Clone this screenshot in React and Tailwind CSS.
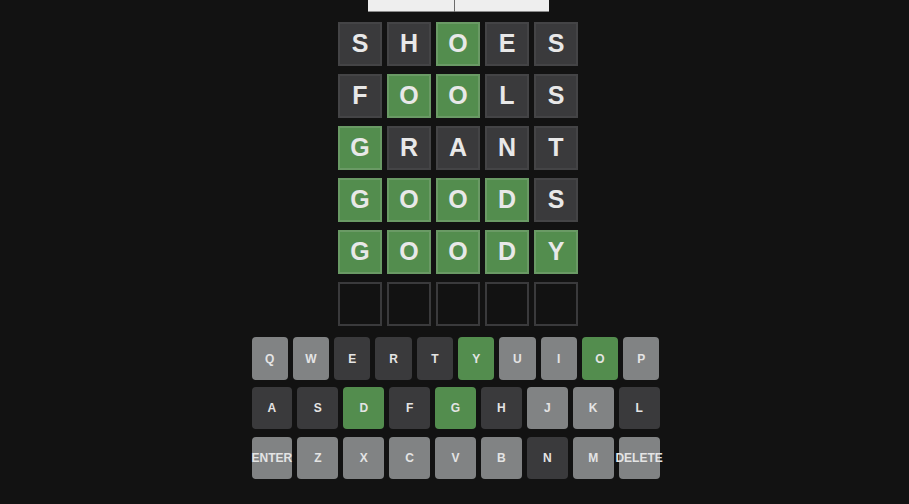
import React from "react";

const rows = [
  ["S", "H", "O", "E", "S"],
  ["F", "O", "O", "L", "S"],
  ["G", "R", "A", "N", "T"],
  ["G", "O", "O", "D", "S"],
  ["G", "O", "O", "D", "Y"],
  ["", "", "", "", ""],
];

// g = green, x = absent
const states = [
  ["x", "x", "g", "x", "x"],
  ["x", "g", "g", "x", "x"],
  ["g", "x", "x", "x", "x"],
  ["g", "g", "g", "g", "x"],
  ["g", "g", "g", "g", "g"],
  ["e", "e", "e", "e", "e"],
];

const tileStyles = {
  g: "bg-[#538d4e] border-[#6a9a65]",
  x: "bg-[#3a3a3c] border-[#444446]",
  e: "bg-[#121212] border-[#3a3a3c]",
};

const keyRows = [
  [["Q", "u"], ["W", "u"], ["E", "x"], ["R", "x"], ["T", "x"], ["Y", "g"], ["U", "u"], ["I", "u"], ["O", "g"], ["P", "u"]],
  [["A", "x"], ["S", "x"], ["D", "g"], ["F", "x"], ["G", "g"], ["H", "x"], ["J", "u"], ["K", "u"], ["L", "x"]],
  [["ENTER", "u"], ["Z", "u"], ["X", "u"], ["C", "u"], ["V", "u"], ["B", "u"], ["N", "x"], ["M", "u"], ["DELETE", "u"]],
];

const keyStyles = {
  u: "bg-[#818384] text-[#e4e4e4]",
  x: "bg-[#3a3a3c] text-[#e4e4e4]",
  g: "bg-[#538d4e] text-[#e4e4e4]",
};

export default function App() {
  return (
    <div
      className="w-full min-h-[504px] bg-[#121212] flex flex-col items-center"
      style={{ fontFamily: '"Liberation Sans", Arial, sans-serif' }}
    >
      {/* Top controls + board */}
      <div className="flex flex-col items-center pl-[7px]">
        <div className="flex h-[12px]">
          <div className="w-[86px] h-full bg-[#eeeeee] border-b border-[#8a8a8a]"></div>
          <div className="w-[1px] h-full bg-[#6b6b6b]"></div>
          <div className="w-[94px] h-full bg-[#eeeeee] border-b border-[#8a8a8a]"></div>
        </div>

        <div className="mt-[10px] flex flex-col gap-[8px]">
          {rows.map((row, r) => (
            <div key={r} className="flex gap-[5px]">
              {row.map((letter, c) => (
                <div
                  key={c}
                  className={`w-[44px] h-[44px] border-2 flex items-center justify-center text-[25px] font-bold text-[#e8e8e8] ${tileStyles[states[r][c]]}`}
                >
                  {letter}
                </div>
              ))}
            </div>
          ))}
        </div>
      </div>

      {/* Keyboard */}
      <div className="mt-[11px] w-[408px] ml-[2px] flex flex-col">
        {keyRows.map((row, r) => (
          <div
            key={r}
            className={`flex gap-[5px] ${r === 0 ? "h-[43px]" : "h-[42px]"} ${r === 1 ? "mt-[7px]" : ""} ${r === 2 ? "mt-[8px]" : ""}`}
          >
            {row.map(([k, s]) => (
              <div
                key={k}
                className={`flex-1 min-w-0 rounded-[4px] flex items-center justify-center text-[12px] font-bold overflow-visible whitespace-nowrap ${keyStyles[s]}`}
              >
                {k}
              </div>
            ))}
          </div>
        ))}
      </div>
    </div>
  );
}
